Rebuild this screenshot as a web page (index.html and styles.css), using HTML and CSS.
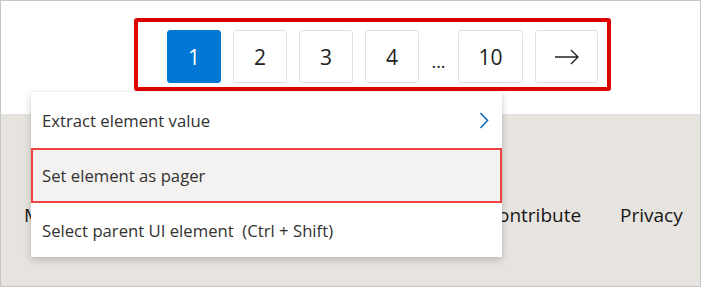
FILE: index.html
```html
<!DOCTYPE html>
<html lang="en">
<head>
    <meta charset="UTF-8">
    <title>Pager</title>
    <link rel="stylesheet" href="styles.css">
</head>
<body>

<div class="frame">
    <div class="top">
        <div class="pager">
            <button class="page current">1</button>
            <button class="page">2</button>
            <button class="page">3</button>
            <button class="page">4</button>
            <span class="dots">...</span>
            <button class="page wide">10</button>
            <button class="page next">
                <svg width="26" height="16" viewBox="0 0 26 16"><path d="M1 8h23M17 1l7 7-7 7" fill="none" stroke="#222" stroke-width="1.4"/></svg>
            </button>
        </div>
    </div>
    <div class="footer">
        <span class="link first">Microsoft</span>
        <span class="link contribute">Contribute</span>
        <span class="link">Privacy</span>
    </div>

    <div class="menu">
        <div class="item">
            <span>Extract element value</span>
            <svg width="10" height="17" viewBox="0 0 10 17"><path d="M1.5 1l7 7.5-7 7.5" fill="none" stroke="#0f6cbd" stroke-width="1.6"/></svg>
        </div>
        <div class="item selected">Set element as pager</div>
        <div class="item last">Select parent UI element&nbsp; (Ctrl + Shift)</div>
    </div>
</div>

</body>
</html>
```

FILE: styles.css
```css
body {
    margin: 0;
    font-family: 'Open Sans', sans-serif;
    color: #222;
}
.frame {
    position: relative;
    width: 701px;
    height: 287px;
    box-sizing: border-box;
    border: 1px solid #c6c6c6;
    overflow: hidden;
    display: flex;
    flex-direction: column;
}
.top {
    height: 114px;
    box-sizing: border-box;
    background: #fff;
    border-bottom: 1px solid #e2e2e2;
    padding-top: 17px;
    padding-left: 133px;
}
.pager {
    display: inline-flex;
    align-items: center;
    gap: 12px;
    border: 4px solid #dc0000;
    border-radius: 3px;
    padding: 8px 9px 4px 29px;
}
.page {
    width: 54px;
    height: 53px;
    border: 1px solid #e1e1e1;
    border-radius: 3px;
    background: #fff;
    color: #222;
    font-family: 'Open Sans', sans-serif;
    font-size: 21px;
    padding: 0;
    display: flex;
    align-items: center;
    justify-content: center;
}
.page.current { background: #0078d4; border-color: #0078d4; color: #fff; }
.page.wide { width: 65px; }
.page.next { width: 63px; }
.dots { width: 15px; font-size: 18px; margin-top: 8px; text-align: center; }
.footer {
    flex: 1;
    background: #e7e4df;
    display: flex;
    align-items: flex-start;
    padding: 87px 0 0 23px;
    font-size: 19px;
    color: #161616;
}
.link.first { width: 462px; }
.link.contribute { width: 134px; }
.menu {
    position: absolute;
    left: 30px;
    top: 91px;
    width: 471px;
    background: #fff;
    box-shadow: 0 3px 8px rgba(0, 0, 0, 0.18), 0 0 2px rgba(0, 0, 0, 0.08);
    font-size: 16.7px;
    color: #323130;
}
.item {
    height: 56px;
    display: flex;
    align-items: center;
    justify-content: space-between;
    padding: 0 13px 0 11px;
    box-sizing: border-box;
}
.item.selected {
    height: 55px;
    background: #f3f2f1;
    border: 2px solid #f04444;
    padding-left: 9px;
}
.item.last { height: 54px; }
```
